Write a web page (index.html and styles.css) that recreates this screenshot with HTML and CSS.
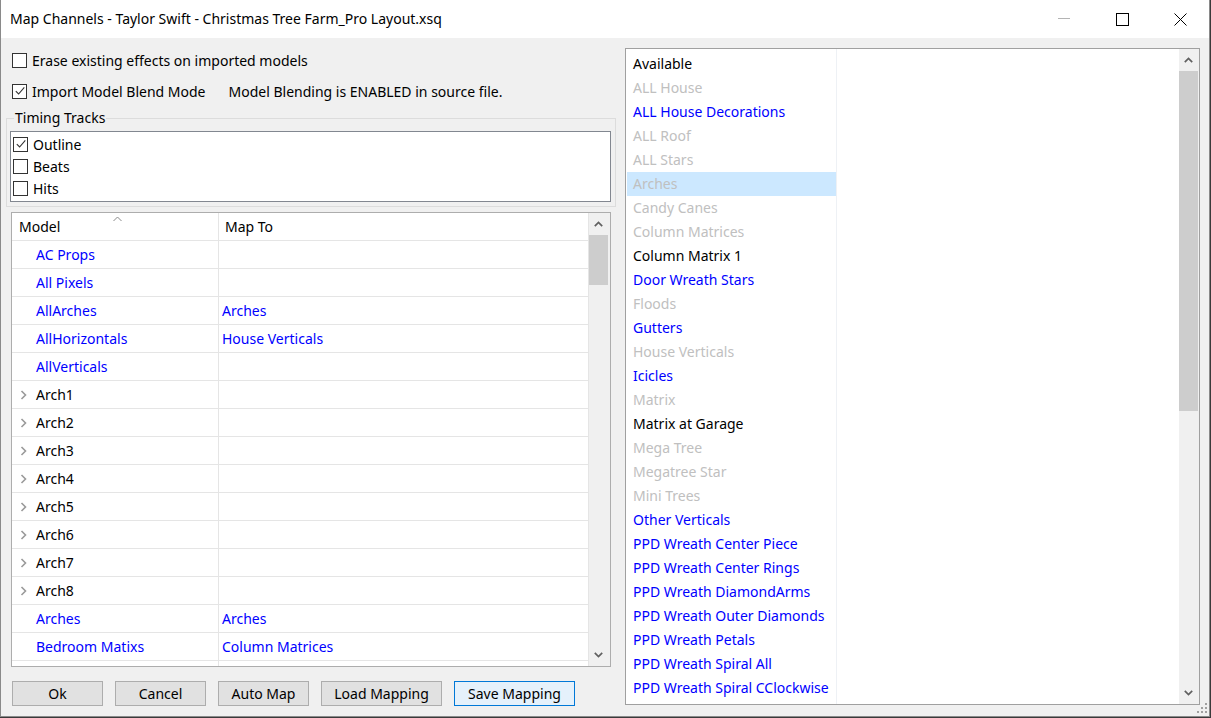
FILE: index.html
```html
<!DOCTYPE html>
<html>
<head>
<meta charset="utf-8">
<title>Map Channels</title>
<link rel="stylesheet" href="styles.css">
</head>
<body>
<div class="window">
  <div class="titlebar">
    <div class="title">Map Channels - Taylor Swift - Christmas Tree Farm_Pro Layout.xsq</div>
    <div class="controls">
      <span class="ctl"><svg width="12" height="12" viewBox="0 0 12 12"><line x1="0" y1="5.5" x2="12" y2="5.5" stroke="#b4b4b4" stroke-width="1"/></svg></span>
      <span class="ctl"><svg width="13" height="13" viewBox="0 0 13 13"><rect x="0.5" y="0.5" width="12" height="12" fill="none" stroke="#000" stroke-width="1"/></svg></span>
      <span class="ctl"><svg width="13" height="13" viewBox="0 0 13 13"><path d="M0.5 0.5 L12.5 12.5 M12.5 0.5 L0.5 12.5" stroke="#000" stroke-width="1" fill="none"/></svg></span>
    </div>
  </div>
  <div class="content">
    <div class="left">
      <div class="chk-row r1"><span class="cb"></span><span>Erase existing effects on imported models</span></div>
      <div class="chk-row r2"><span class="cb"><svg width="12" height="12" viewBox="0 0 12 12"><path d="M1.8 6.2 L4.6 9 L10.3 2.3" fill="none" stroke="#333" stroke-width="1.1"/></svg></span><span>Import Model Blend Mode</span><span class="note">Model Blending is ENABLED in source file.</span></div>
      <div class="group">
        <div class="legend">Timing Tracks</div>
        <div class="tracklist">
          <div class="track"><span class="cb sm"><svg width="12" height="12" viewBox="0 0 12 12"><path d="M1.8 6.2 L4.6 9 L10.3 2.3" fill="none" stroke="#333" stroke-width="1.1"/></svg></span>Outline</div>
          <div class="track"><span class="cb sm"></span>Beats</div>
          <div class="track"><span class="cb sm"></span>Hits</div>
        </div>
      </div>
      <div class="tree">
        <div class="tree-main">
          <div class="thead">
            <div class="c1">Model</div>
            <div class="c2">Map To</div>
            <svg class="sort" width="9" height="6" viewBox="0 0 9 6"><path d="M0.5 5 L4.5 1 L8.5 5" fill="none" stroke="#8a8a8a" stroke-width="1"/></svg>
          </div>
          <div class="row blue"><div class="c1">AC Props</div><div class="c2"></div></div>
          <div class="row blue"><div class="c1">All Pixels</div><div class="c2"></div></div>
          <div class="row blue"><div class="c1">AllArches</div><div class="c2">Arches</div></div>
          <div class="row blue"><div class="c1">AllHorizontals</div><div class="c2">House Verticals</div></div>
          <div class="row blue"><div class="c1">AllVerticals</div><div class="c2"></div></div>
          <div class="row"><div class="c1"><svg class="exp" width="7" height="10" viewBox="0 0 7 10"><path d="M1.5 1 L5.5 5 L1.5 9" fill="none" stroke="#9a9a9a" stroke-width="1.6"/></svg>Arch1</div><div class="c2"></div></div>
          <div class="row"><div class="c1"><svg class="exp" width="7" height="10" viewBox="0 0 7 10"><path d="M1.5 1 L5.5 5 L1.5 9" fill="none" stroke="#9a9a9a" stroke-width="1.6"/></svg>Arch2</div><div class="c2"></div></div>
          <div class="row"><div class="c1"><svg class="exp" width="7" height="10" viewBox="0 0 7 10"><path d="M1.5 1 L5.5 5 L1.5 9" fill="none" stroke="#9a9a9a" stroke-width="1.6"/></svg>Arch3</div><div class="c2"></div></div>
          <div class="row"><div class="c1"><svg class="exp" width="7" height="10" viewBox="0 0 7 10"><path d="M1.5 1 L5.5 5 L1.5 9" fill="none" stroke="#9a9a9a" stroke-width="1.6"/></svg>Arch4</div><div class="c2"></div></div>
          <div class="row"><div class="c1"><svg class="exp" width="7" height="10" viewBox="0 0 7 10"><path d="M1.5 1 L5.5 5 L1.5 9" fill="none" stroke="#9a9a9a" stroke-width="1.6"/></svg>Arch5</div><div class="c2"></div></div>
          <div class="row"><div class="c1"><svg class="exp" width="7" height="10" viewBox="0 0 7 10"><path d="M1.5 1 L5.5 5 L1.5 9" fill="none" stroke="#9a9a9a" stroke-width="1.6"/></svg>Arch6</div><div class="c2"></div></div>
          <div class="row"><div class="c1"><svg class="exp" width="7" height="10" viewBox="0 0 7 10"><path d="M1.5 1 L5.5 5 L1.5 9" fill="none" stroke="#9a9a9a" stroke-width="1.6"/></svg>Arch7</div><div class="c2"></div></div>
          <div class="row"><div class="c1"><svg class="exp" width="7" height="10" viewBox="0 0 7 10"><path d="M1.5 1 L5.5 5 L1.5 9" fill="none" stroke="#9a9a9a" stroke-width="1.6"/></svg>Arch8</div><div class="c2"></div></div>
          <div class="row blue"><div class="c1">Arches</div><div class="c2">Arches</div></div>
          <div class="row blue"><div class="c1">Bedroom Matixs</div><div class="c2">Column Matrices</div></div>
          <div class="row blue"><div class="c1"></div><div class="c2"></div></div>
        </div>
        <div class="vscroll">
          <div class="sb-btn"><svg width="9" height="6" viewBox="0 0 9 6"><path d="M0.8 5.2 L4.5 1.5 L8.2 5.2" fill="none" stroke="#606060" stroke-width="1.7"/></svg></div>
          <div class="thumb tree-thumb"></div>
          <div class="track-fill"></div>
          <div class="sb-btn"><svg width="9" height="6" viewBox="0 0 9 6"><path d="M0.8 0.8 L4.5 4.5 L8.2 0.8" fill="none" stroke="#606060" stroke-width="1.7"/></svg></div>
        </div>
      </div>
      <div class="buttons">
        <button class="btn w91">Ok</button>
        <button class="btn w91">Cancel</button>
        <button class="btn w91">Auto Map</button>
        <button class="btn w121">Load Mapping</button>
        <button class="btn w121 focus">Save Mapping</button>
      </div>
    </div>
    <div class="right">
      <div class="list">
        <div class="col1">
          <div class="item">Available</div>
          <div class="item dim">ALL House</div>
          <div class="item blue">ALL House Decorations</div>
          <div class="item dim">ALL Roof</div>
          <div class="item dim">ALL Stars</div>
          <div class="item dim sel">Arches</div>
          <div class="item dim">Candy Canes</div>
          <div class="item dim">Column Matrices</div>
          <div class="item">Column Matrix 1</div>
          <div class="item blue">Door Wreath Stars</div>
          <div class="item dim">Floods</div>
          <div class="item blue">Gutters</div>
          <div class="item dim">House Verticals</div>
          <div class="item blue">Icicles</div>
          <div class="item dim">Matrix</div>
          <div class="item">Matrix at Garage</div>
          <div class="item dim">Mega Tree</div>
          <div class="item dim">Megatree Star</div>
          <div class="item dim">Mini Trees</div>
          <div class="item blue">Other Verticals</div>
          <div class="item blue">PPD Wreath Center Piece</div>
          <div class="item blue">PPD Wreath Center Rings</div>
          <div class="item blue">PPD Wreath DiamondArms</div>
          <div class="item blue">PPD Wreath Outer Diamonds</div>
          <div class="item blue">PPD Wreath Petals</div>
          <div class="item blue">PPD Wreath Spiral All</div>
          <div class="item blue">PPD Wreath Spiral CClockwise</div>
        </div>
        <div class="rest"></div>
        <div class="vscroll rscroll">
          <div class="sb-btn tall"><svg width="9" height="6" viewBox="0 0 9 6"><path d="M0.8 5.2 L4.5 1.5 L8.2 5.2" fill="none" stroke="#606060" stroke-width="1.7"/></svg></div>
          <div class="thumb list-thumb"></div>
          <div class="track-fill"></div>
          <div class="sb-btn tall"><svg width="9" height="6" viewBox="0 0 9 6"><path d="M0.8 0.8 L4.5 4.5 L8.2 0.8" fill="none" stroke="#606060" stroke-width="1.7"/></svg></div>
        </div>
      </div>
    </div>
  </div>
  <svg class="grip" width="11" height="11" viewBox="0 0 11 11">
    <rect x="8" y="0" width="2" height="2" fill="#a0a0a0"/>
    <rect x="8" y="4" width="2" height="2" fill="#a0a0a0"/>
    <rect x="4" y="4" width="2" height="2" fill="#a0a0a0"/>
    <rect x="8" y="8" width="2" height="2" fill="#a0a0a0"/>
    <rect x="4" y="8" width="2" height="2" fill="#a0a0a0"/>
    <rect x="0" y="8" width="2" height="2" fill="#a0a0a0"/>
  </svg>
</div>
</body>
</html>
```

FILE: styles.css
```css
* { box-sizing: border-box; }
html, body { margin: 0; padding: 0; }
body {
  width: 1211px;
  height: 718px;
  overflow: hidden;
  background: #3a3a3a;
  font-family: "Noto Sans", "Open Sans", sans-serif;
  font-size: 14px;
  color: #000;
}
.window {
  position: relative;
  width: 1210px;
  height: 717px;
  background: #f0f0f0;
  border: 1px solid #8a8a8a;
  border-top: none;
  display: flex;
  flex-direction: column;
}
.titlebar {
  height: 38px;
  flex: none;
  background: #fff;
  display: flex;
  align-items: center;
}
.title {
  flex: 1;
  padding-left: 9px;
  line-height: 20px;
  white-space: nowrap;
}
.controls { display: flex; height: 38px; }
.ctl {
  width: 58px;
  height: 38px;
  display: flex;
  align-items: center;
  justify-content: center;
}
.content { flex: 1; display: flex; }
.left {
  width: 610px;
  margin-left: 5px;
  display: flex;
  flex-direction: column;
}
.chk-row {
  display: flex;
  align-items: center;
  height: 20px;
  padding-left: 6px;
  white-space: nowrap;
}
.r1 { margin-top: 12px; }
.r2 { margin-top: 11px; }
.cb {
  width: 15px;
  height: 15px;
  flex: none;
  border: 1px solid #333;
  background: #fff;
  margin-right: 5px;
  display: flex;
  align-items: center;
  justify-content: center;
}
.cb.sm { width: 15px; height: 15px; margin-right: 5px; }
.note { margin-left: 23px; }
.group {
  margin-top: 17px;
  height: 89px;
  border: 1px solid #dcdcdc;
  padding: 0 4px 4px 3px;
  display: flex;
  flex-direction: column;
}
.legend {
  align-self: flex-start;
  margin-top: -11px;
  margin-left: 4px;
  padding: 0 1px;
  height: 20px;
  line-height: 20px;
  background: #f0f0f0;
}
.tracklist {
  margin-top: 3px;
  height: 71px;
  background: #fff;
  border: 1px solid #828790;
  padding-top: 1px;
}
.track {
  height: 22px;
  display: flex;
  align-items: center;
  padding-left: 2px;
}
.tree {
  margin-top: 5px;
  margin-left: 5px;
  width: 600px;
  height: 455px;
  border: 1px solid #adadad;
  background: #fff;
  display: flex;
  overflow: hidden;
}
.tree-main {
  width: 577px;
  flex: none;
  border-right: 1px solid #e5e5e5;
  overflow: hidden;
}
.thead, .row {
  display: flex;
  height: 28px;
  border-bottom: 1px solid #e5e5e5;
  align-items: stretch;
}
.thead { position: relative; }
.thead .c1, .row .c1 {
  width: 207px;
  flex: none;
  border-right: 1px solid #e5e5e5;
  display: flex;
  align-items: center;
  white-space: nowrap;
}
.thead .c2, .row .c2 {
  flex: 1;
  display: flex;
  align-items: center;
  white-space: nowrap;
}
.thead .c2 { padding-left: 6px; }
.row .c2 { padding-left: 3px; }
.thead .c1 { padding-left: 7px; }
.row .c1 { padding-left: 24px; }
.row .c1 .exp { margin-left: -16px; margin-right: 9px; }
.sort { position: absolute; left: 101px; top: 3px; }
.blue { color: #0000ff; }
.vscroll {
  width: 21px;
  flex: none;
  background: #f0f0f0;
  display: flex;
  flex-direction: column;
}
.sb-btn {
  height: 22px;
  flex: none;
  display: flex;
  align-items: center;
  justify-content: center;
  padding-right: 2px;
}
.thumb { flex: none; background: #cdcdcd; width: 19px; }
.tree-thumb { height: 50px; }
.list-thumb { height: 340px; }
.track-fill { flex: 1; }
.buttons {
  margin-top: 14px;
  margin-left: 6px;
  display: flex;
  gap: 12px;
}
.btn {
  height: 25px;
  border: 1px solid #adadad;
  background: #e1e1e1;
  font-family: inherit;
  font-size: 14px;
  color: #000;
  padding: 0;
  line-height: 22px;
}
.w91 { width: 91px; }
.w121 { width: 121px; }
.btn.focus { border-color: #0078d7; background: #e5f1fb; }
.right { margin-left: 9px; margin-top: 10px; }
.list {
  width: 575px;
  height: 657px;
  border: 1px solid #a0a0a0;
  background: #fff;
  display: flex;
}
.col1 {
  width: 210px;
  flex: none;
  margin-left: 1px;
  padding-top: 3px;
  border-right: 1px solid #eef1f5;
  overflow: hidden;
}
.item {
  height: 24px;
  line-height: 24px;
  padding-left: 6px;
  white-space: nowrap;
}
.item.dim { color: #c0c0c0; }
.item.sel { background: #cce8ff; }
.rest { flex: 1; }
.rscroll { width: 20px; }
.rscroll .sb-btn { padding-right: 1px; }
.grip { position: absolute; right: 1px; bottom: 2px; }
```
